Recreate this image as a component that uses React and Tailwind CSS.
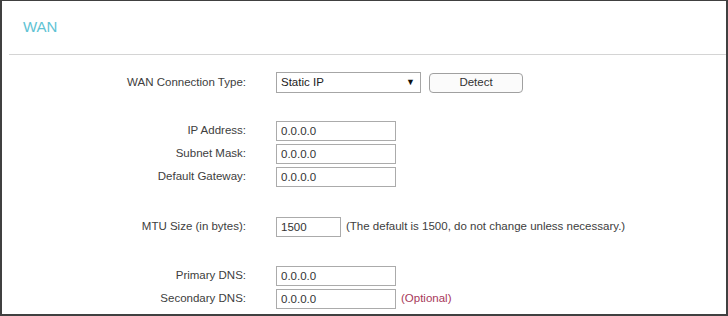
import React from 'react';

const font = { fontFamily: '"Liberation Sans", Arial, sans-serif' };

function Field({ label, value, width = 'w-[120px]', note, noteClass = 'text-[#333]', mt }) {
  return (
    <div className={`flex items-center h-[20px] ${mt}`}>
      <div className="w-[245px] text-right text-[11.5px] text-[#404040] pr-px">{label}</div>
      <input
        readOnly
        value={value}
        className={`ml-[29px] h-[20px] ${width} border border-[#ababab] bg-white px-[4px] text-[11.5px] text-[#333] outline-none`}
        style={font}
      />
      {note && <span className={`ml-[5px] text-[11.5px] ${noteClass}`}>{note}</span>}
    </div>
  );
}

export default function App() {
  return (
    <div
      className="w-[728px] h-[316px] bg-white border-t border-l-2 border-r-2 border-b-2 border-[#404040] overflow-hidden"
      style={font}
    >
      <div className="pl-[21px] pt-[16px] h-[53px]">
        <h1 className="text-[15px] text-[#5ec3d4] leading-[20px]">WAN</h1>
      </div>
      <div className="ml-[7px] h-px bg-[#d4d4d4]" />

      <div className="flex flex-col">
        <div className="flex items-center h-[21px] mt-[17px]">
          <div className="w-[245px] text-right text-[11.5px] text-[#404040] pr-px">WAN Connection Type:</div>
          <div className="ml-[29px] h-[21px] w-[145px] border border-[#a6a6a6] bg-white flex items-center justify-between pl-[4px] pr-[5px]">
            <span className="text-[11.5px] text-[#222]">Static IP</span>
            <span className="text-[9px] text-[#111]">▼</span>
          </div>
          <button className="ml-[8px] h-[20px] w-[94px] rounded-[4px] border border-[#a0a0a0] bg-[#fbfbfb] text-[11.5px] text-[#333]">
            Detect
          </button>
        </div>

        <Field label="IP Address:" value="0.0.0.0" mt="mt-[28px]" />
        <Field label="Subnet Mask:" value="0.0.0.0" mt="mt-[3px]" />
        <Field label="Default Gateway:" value="0.0.0.0" mt="mt-[3px]" />

        <Field
          label="MTU Size (in bytes):"
          value="1500"
          width="w-[65px]"
          note="(The default is 1500, do not change unless necessary.)"
          noteClass="text-[#404040]"
          mt="mt-[30px]"
        />

        <Field label="Primary DNS:" value="0.0.0.0" mt="mt-[29px]" />
        <Field
          label="Secondary DNS:"
          value="0.0.0.0"
          note="(Optional)"
          noteClass="text-[#a8385a]"
          mt="mt-[3px]"
        />
      </div>
    </div>
  );
}
